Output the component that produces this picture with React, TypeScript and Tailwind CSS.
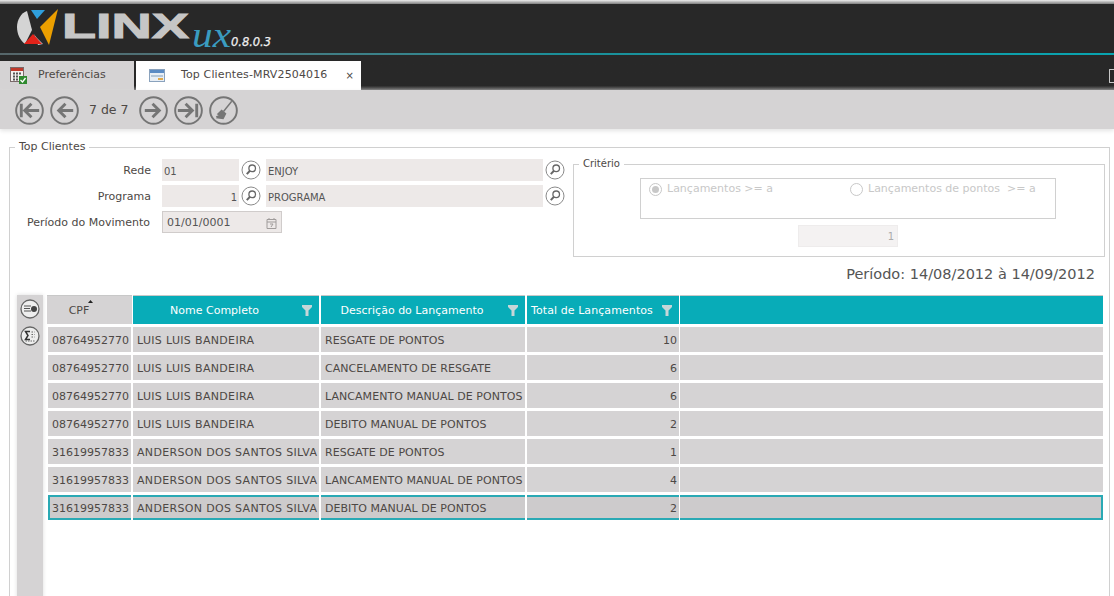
import React from "react";

const font = "font-['DejaVu_Sans',sans-serif]";

const rows = [
  ["08764952770", "LUIS LUIS BANDEIRA", "RESGATE DE PONTOS", "10"],
  ["08764952770", "LUIS LUIS BANDEIRA", "CANCELAMENTO DE RESGATE", "6"],
  ["08764952770", "LUIS LUIS BANDEIRA", "LANCAMENTO MANUAL DE PONTOS", "6"],
  ["08764952770", "LUIS LUIS BANDEIRA", "DEBITO MANUAL DE PONTOS", "2"],
  ["31619957833", "ANDERSON DOS SANTOS SILVA", "RESGATE DE PONTOS", "1"],
  ["31619957833", "ANDERSON DOS SANTOS SILVA", "LANCAMENTO MANUAL DE PONTOS", "4"],
  ["31619957833", "ANDERSON DOS SANTOS SILVA", "DEBITO MANUAL DE PONTOS", "2"],
];

function Logo() {
  return (
    <svg width="280" height="49" viewBox="0 0 280 49" className="overflow-visible" aria-label="Linx UX">
      {/* X mark */}
      <path d="M27 7 C21 9 17 16 17 23 C17 30 20 36 25 40 L32 26 Z" fill="#d4d4d4" />
      <path d="M36 33 L43 40 L38 41 L34 30 Z" fill="#d4d4d4" />
      <path d="M31 6 L45 6 L37 15 Z" fill="#2f9fdc" />
      <path d="M24 40 L42 40 L33 30 Z" fill="#e2231a" />
      <path d="M58 5 L40 23 L49 41 Z" fill="#eb9f00" />
      <text x="62" y="34" textLength="127" lengthAdjust="spacingAndGlyphs" fontFamily="'Liberation Sans',sans-serif" fontWeight="700" fontSize="35" fill="#c6c6c6" stroke="#c6c6c6" strokeWidth="1">
        LINX
      </text>
      <text x="192" y="43" textLength="39" lengthAdjust="spacingAndGlyphs" fontFamily="'Liberation Serif',serif" fontStyle="italic" fontSize="36" fill="#3a9cc0">
        ux
      </text>
      <text x="231" y="42" fontFamily="'DejaVu Sans',sans-serif" fontStyle="italic" fontSize="11.5" fill="#f0f0f0" stroke="#f0f0f0" strokeWidth="0.25" textLength="40">
        0.8.0.3
      </text>
    </svg>
  );
}

function CalendarTabIcon() {
  return (
    <svg width="17" height="17" viewBox="0 0 17 17">
      <rect x="0.5" y="0.5" width="13" height="14" fill="#f4f1ef" stroke="#7a6a6a" />
      <rect x="1" y="1" width="12" height="3" fill="#c0392b" />
      <path d="M3 5.5h2v2H3zM6 5.5h2v2H6zM9 5.5h2v2H9zM3 8.5h2v2H3zM6 8.5h2v2H6zM3 11.5h2v2H3zM6 11.5h2v2H6z" fill="#555" />
      <rect x="9" y="9" width="8" height="8" fill="#2f8a2f" />
      <path d="M10.5 13l2 2 3-4" stroke="#fff" strokeWidth="1.3" fill="none" />
    </svg>
  );
}

function WindowTabIcon() {
  return (
    <svg width="16" height="13" viewBox="0 0 16 13">
      <rect x="0.5" y="0.5" width="15" height="12" fill="#e8eef5" stroke="#8aa2bd" />
      <rect x="1" y="1" width="14" height="3" fill="#5b8bc4" />
      <rect x="2" y="6" width="12" height="2" fill="#b5c6d8" />
      <rect x="9" y="9" width="5" height="2" fill="#e0a94a" />
    </svg>
  );
}

function NavButton({ kind }: { kind: "first" | "prev" | "next" | "last" | "broom" }) {
  return (
    <svg width="29" height="29" viewBox="0 0 30 30" className="shrink-0">
      <circle cx="15" cy="15" r="13.8" fill="none" stroke="#757575" strokeWidth="2" />
      <g fill="none" stroke="#757575" strokeWidth="3">
        {kind === "first" && <path d="M6.5 8v14M25 15H11M17 8l-7 7 7 7" />}
        {kind === "prev" && <path d="M24 15H9M16 8l-7 7 7 7" />}
        {kind === "next" && <path d="M6 15h15M14 8l7 7-7 7" />}
        {kind === "last" && <path d="M4 15h14M12 8l7 7-7 7M23.5 8v14" />}
      </g>
      {kind === "broom" && (
        <g>
          <path d="M23.5 5.5L15 16" stroke="#757575" strokeWidth="1.5" />
          <path d="M13 14l5 4-3 6-8-1 1-1-1-1 3-1-2-1z" fill="#757575" />
        </g>
      )}
    </svg>
  );
}

function SearchButton() {
  return (
    <svg width="20" height="20" viewBox="0 0 20 20" className="shrink-0">
      <circle cx="10" cy="10" r="9" fill="#fff" stroke="#8a8a8a" />
      <circle cx="11.2" cy="8.3" r="3.3" fill="none" stroke="#666" strokeWidth="1.3" />
      <path d="M8.8 10.8L5.8 14.2" stroke="#666" strokeWidth="2" />
    </svg>
  );
}

function FilterIcon() {
  return (
    <svg width="10" height="11" viewBox="0 0 10 11" className="shrink-0">
      <path d="M0 0h10v2L6.5 5.5V11h-3V5.5L0 2z" fill="#c5d6d8" />
    </svg>
  );
}

function Field({ text, width, right }: { text: string; width: string; right?: boolean }) {
  return (
    <div className={`flex h-[22px] items-center bg-[#ede9e8] px-[2px] pt-[2px] text-[10px] text-[#555] ${width} ${right ? "justify-end" : ""}`}>
      {text}
    </div>
  );
}

function HeaderCell({ label, className }: { label: string; className: string }) {
  return (
    <div className={`relative flex h-[29px] shrink-0 items-center border-t border-[#c8c8c8] bg-[#08acb8] pt-[3px] text-white ${className}`}>
      {label}
      <span className="absolute right-[7px] top-[9px]">
        <FilterIcon />
      </span>
    </div>
  );
}

export default function App() {
  return (
    <div className={`flex h-[596px] w-[1114px] flex-col overflow-hidden bg-white text-[11px] ${font}`}>
      {/* Top bar */}
      <div className="h-[4px] bg-gradient-to-b from-[#eeeeee] to-[#7f7f7f]" />
      <div className="flex h-[49px] items-start bg-[#282828]">
        <Logo />
      </div>
      <div className="h-[2px] bg-gradient-to-r from-[#56666a] via-[#1b8f99] to-[#08a4b0]" />
      <div className="h-[6px] bg-[#282828]" />

      {/* Tabs */}
      <div className="flex h-[29px] items-stretch bg-gradient-to-b from-[#282828] via-[#282828] via-85% to-[#777777]">
        <div className="flex w-[134px] items-center bg-[#d5d3d4] pl-[10px] text-[#4d4845]">
          <CalendarTabIcon />
          <span className="ml-[11px]">Preferências</span>
        </div>
        <div className="ml-[2px] flex w-[225px] items-center bg-white pl-[13px] text-[#4d4845]">
          <WindowTabIcon />
          <span className="ml-[16px] tracking-[0.13px]">Top Clientes-MRV2504016</span>
          <span className="ml-[18px] text-[10px]">×</span>
        </div>
        <div className="ml-auto self-center">
          <div className="h-[14px] w-[5px] rounded-l-[1px] border border-r-0 border-[#c8c8c8]" />
        </div>
      </div>

      {/* Toolbar */}
      <div className="relative flex h-[39px] items-center gap-[6px] bg-[#d5d3d4] pl-[15px] pt-[1px] text-[13px] text-[#4d4845] shadow-[0_2px_4px_#e5e5e5]">
        <NavButton kind="first" />
        <NavButton kind="prev" />
        <span className="w-[48px] whitespace-nowrap pl-[4px] text-[12.5px]">7 de 7</span>
        <NavButton kind="next" />
        <NavButton kind="last" />
        <NavButton kind="broom" />
      </div>

      {/* Main fieldset */}
      <div className="relative ml-[9px] mr-[4px] mt-[18px] flex-1 border border-b-0 border-[#d0d0d0] text-[#4d4845]">
        <span className="absolute left-[5px] top-[-9px] bg-white px-[4px] leading-[16px]">Top Clientes</span>

        <div className="flex h-[108px]">
          {/* Filters */}
          <div className="flex w-[557px] flex-col gap-[4px] pt-[11px]">
            <div className="flex items-center">
              <span className="w-[141px] pt-[2px] text-right">Rede</span>
              <div className="ml-[11px]"><Field text="01" width="w-[77px]" /></div>
              <div className="ml-[2px]"><SearchButton /></div>
              <div className="ml-[5px]"><Field text="ENJOY" width="w-[277px]" /></div>
              <div className="ml-[2px]"><SearchButton /></div>
            </div>
            <div className="flex items-center">
              <span className="w-[141px] pt-[2px] text-right">Programa</span>
              <div className="ml-[11px]"><Field text="1" width="w-[77px]" right /></div>
              <div className="ml-[2px]"><SearchButton /></div>
              <div className="ml-[5px]"><Field text="PROGRAMA" width="w-[277px]" /></div>
              <div className="ml-[2px]"><SearchButton /></div>
            </div>
            <div className="flex items-center">
              <span className="w-[140px] pt-[2px] text-right">Período do Movimento</span>
              <div className="ml-[12px] flex h-[22px] w-[120px] items-center justify-between border border-[#d0cccb] bg-[#ede9e8] px-[4px] pt-[2px] text-[#555]">
                01/01/0001
                <svg width="11" height="12" viewBox="0 0 11 12">
                  <path d="M1 2.5h9v9H1zM1 5h9M3 1v2M8 1v2M4 7h3l-2 3" fill="none" stroke="#a09c9b" />
                </svg>
              </div>
            </div>
          </div>

          {/* Critério */}
          <div className="relative ml-[6px] mt-[16px] h-[93px] w-[532px] border border-[#d0d0d0]">
            <span className="absolute left-[5px] top-[-9px] bg-white px-[4px] text-[10px] leading-[16px]">Critério</span>
            <div className="ml-[66px] mt-[13px] h-[41px] w-[416px] border border-[#d0d0d0] text-[#c8c8c8]">
              <div className="flex items-center pt-[2px]">
                <span className="ml-[8px] flex h-[13px] w-[13px] items-center justify-center rounded-full border border-[#c8c8c8]">
                  <span className="h-[7px] w-[7px] rounded-full bg-[#c8c8c8]" />
                </span>
                <span className="ml-[5px] w-[175px]">Lançamentos &gt;= a</span>
                <span className="ml-[8px] h-[13px] w-[13px] rounded-full border border-[#c8c8c8]" />
                <span className="ml-[5px] whitespace-pre">Lançamentos de pontos  &gt;= a</span>
              </div>
            </div>
            <div className="ml-[224px] mt-[6px] flex h-[22px] w-[100px] items-center justify-end border border-[#eeecec] bg-[#f4f2f2] px-[3px] text-[10px] text-[#aaa]">
              1
            </div>
          </div>
        </div>

        <div className="mt-[9px] pr-[14px] text-right text-[14.5px] leading-[18px] text-[#555]">
          Período: 14/08/2012 à 14/09/2012
        </div>

        {/* Grid */}
        <div className="mt-[12px] flex h-full">
          <div className="ml-[7px] flex w-[26px] shrink-0 flex-col items-center gap-[7px] bg-[#d5d3d4] pt-[4px] shadow-[0_0_4px_#ddd]">
            <svg width="20" height="20" viewBox="0 0 20 20">
              <circle cx="10" cy="10" r="9" fill="#eee" stroke="#666" strokeWidth="1.3" />
              <path d="M4 7h7M4 9.5h6M4 12h7" stroke="#555" strokeWidth="1.2" />
              <circle cx="14" cy="10" r="3" fill="#444" />
            </svg>
            <svg width="20" height="20" viewBox="0 0 20 20">
              <circle cx="10" cy="10" r="9" fill="#eee" stroke="#666" strokeWidth="1.3" />
              <path d="M10 5.5H5.5L8 9.5l-2.5 4H10" fill="none" stroke="#333" strokeWidth="1.5" />
              <path d="M11.5 6h3M11.5 8.5h3M11.5 11h3M5.5 15h9" stroke="#666" strokeWidth="1.2" strokeDasharray="1.5 1" />
            </svg>
          </div>

          <div className="ml-[4px] w-[1056px] shrink-0">
            <div className="flex text-[11px]">
              <div className="relative flex h-[29px] w-[85px] shrink-0 items-center justify-center border-t border-[#c8c8c8] bg-[#d5d3d4] pr-[21px] pt-[3px] text-[#4d4845]">
                CPF
                <svg width="5" height="3" viewBox="0 0 5 3" className="absolute left-[41px] top-[4px]">
                  <path d="M2.5 0L5 3H0z" fill="#222" />
                </svg>
              </div>
              <HeaderCell label="Nome Completo" className="ml-[1px] w-[186px] justify-center pr-[23px]" />
              <HeaderCell label="Descrição do Lançamento" className="ml-[2px] w-[204px] justify-center pr-[22px]" />
              <HeaderCell label="Total de Lançamentos" className="ml-[2px] w-[152px] pl-[4px] tracking-[0.08px]" />
              <div className="ml-[1px] h-[29px] flex-1 border-t border-[#c8c8c8] bg-[#08acb8]" />
            </div>
            <div className="mt-[3px] flex flex-col gap-[3px] text-[11px] text-[#4d4845]">
              {rows.map((r, i) => {
                const selected = i === rows.length - 1;
                const cell = `flex h-[25px] shrink-0 items-center pt-[3px] ${selected ? "border-y-2 border-[#2aa9b4] bg-[#cdcbcc]" : "bg-[#d5d3d4]"}`;
                return (
                  <div key={i} className="flex">
                    <div className={`${cell} ml-[1px] w-[83px] ${selected ? "border-l-2 pl-[2px]" : "pl-[4px]"}`}>{r[0]}</div>
                    <div className={`${cell} ml-[2px] w-[186px] pl-[4px] tracking-[0.33px]`}>{r[1]}</div>
                    <div className={`${cell} ml-[2px] w-[204px] pl-[4px] tracking-[0.05px]`}>{r[2]}</div>
                    <div className={`${cell} ml-[2px] w-[152px] justify-end pr-[2px]`}>{r[3]}</div>
                    <div className={`${cell} ml-[1px] flex-1 ${selected ? "border-r-2" : ""}`} />
                  </div>
                );
              })}
            </div>
          </div>
        </div>
      </div>
    </div>
  );
}
